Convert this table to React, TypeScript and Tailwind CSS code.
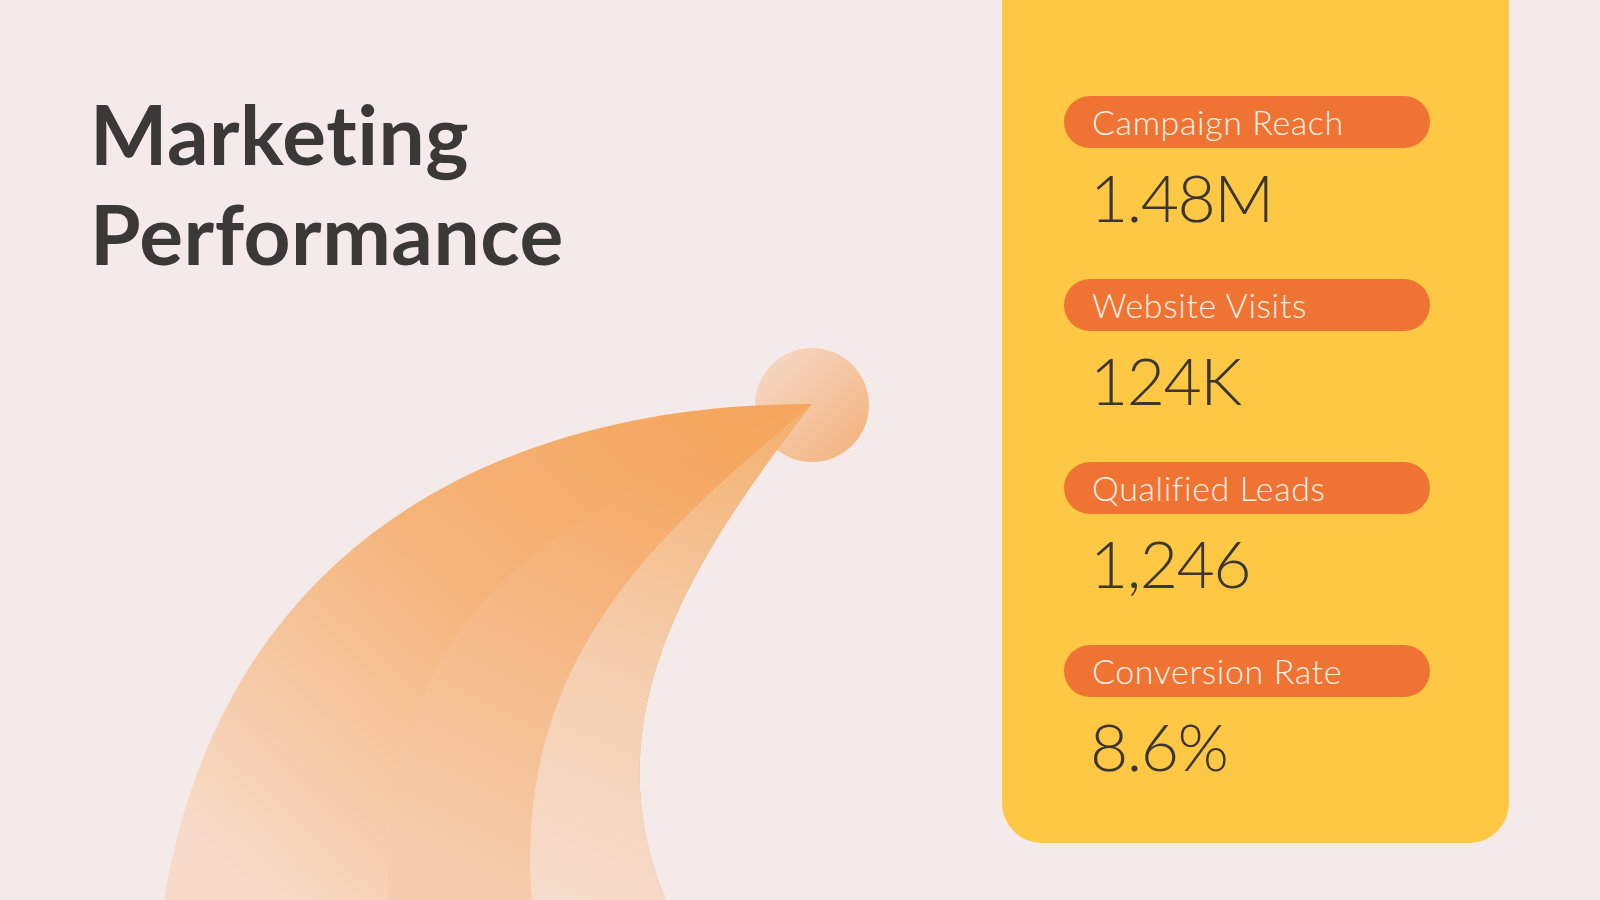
import React from "react";

const METRICS = [
  { label: "Campaign Reach", value: "1.48M" },
  { label: "Website Visits", value: "124K" },
  { label: "Qualified Leads", value: "1,246" },
  { label: "Conversion Rate", value: "8.6%" },
];

function Swoosh() {
  return (
    <svg
      className="pointer-events-none absolute inset-0"
      width="1600"
      height="900"
      viewBox="0 0 1600 900"
      fill="none"
    >
      <defs>
        <linearGradient id="g1" gradientUnits="userSpaceOnUse" x1="720" y1="404" x2="260" y2="900">
          <stop offset="0" stopColor="#f5a65e" />
          <stop offset="0.45" stopColor="#f5b47a" />
          <stop offset="1" stopColor="#f7dbc8" />
        </linearGradient>
        <linearGradient id="g2" gradientUnits="userSpaceOnUse" x1="700" y1="440" x2="470" y2="900">
          <stop offset="0" stopColor="#f5a65f" />
          <stop offset="1" stopColor="#f5ceb0" />
        </linearGradient>
        <linearGradient id="g3" gradientUnits="userSpaceOnUse" x1="760" y1="420" x2="560" y2="900">
          <stop offset="0" stopColor="#f4b272" />
          <stop offset="0.55" stopColor="#f5cfb0" />
          <stop offset="1" stopColor="#f6dccc" />
        </linearGradient>
        <linearGradient id="gc" x1="0" y1="0" x2="1" y2="1">
          <stop offset="0" stopColor="#f6dccc" />
          <stop offset="1" stopColor="#f3b078" />
        </linearGradient>
      </defs>
      <circle cx="812" cy="405" r="57" fill="url(#gc)" />
      {/* outer horn */}
      <path
        d="M812 404 C480 404 220 560 164 900 L666 900 C590 720 690 560 812 404 Z"
        fill="url(#g1)"
      />
      {/* middle horn */}
      <path
        d="M812 404 C600 500 380 580 388 900 L666 900 C590 720 690 560 812 404 Z"
        fill="url(#g2)"
      />
      {/* inner horn */}
      <path
        d="M812 404 C690 510 510 640 532 900 L666 900 C590 720 690 560 812 404 Z"
        fill="url(#g3)"
      />
    </svg>
  );
}

export default function App() {
  return (
    <div
      className="relative flex h-[900px] w-[1600px] overflow-hidden bg-[#f5eaea]"
      style={{ fontFamily: "Lato, 'Open Sans', sans-serif" }}
    >
      <Swoosh />

      <div className="relative flex-1 pl-[90px] pt-[83px]">
        <h1 className="text-[82px] font-bold leading-[100px] tracking-[0.5px] text-[#3b3937]">
          Marketing
          <br />
          Performance
        </h1>
      </div>

      <div className="relative mr-[91px] flex h-[843px] w-[507px] flex-col gap-[49px] self-start rounded-b-[40px] bg-[#fec845] pl-[62px] pt-[96px]">
        {METRICS.map((m) => (
          <div key={m.label} className="flex flex-col gap-[16px]">
            <div className="flex h-[52px] w-[366px] items-center rounded-full bg-[#ef7433] pl-[28px]">
              <span className="text-[34px] font-light leading-none tracking-[0.6px] text-[#fdf1e8]">{m.label}</span>
            </div>
            <div className="pl-[26px] text-[66px] font-light leading-none tracking-[-1.5px] text-[#3a3632]">{m.value}</div>
          </div>
        ))}
      </div>
    </div>
  );
}
